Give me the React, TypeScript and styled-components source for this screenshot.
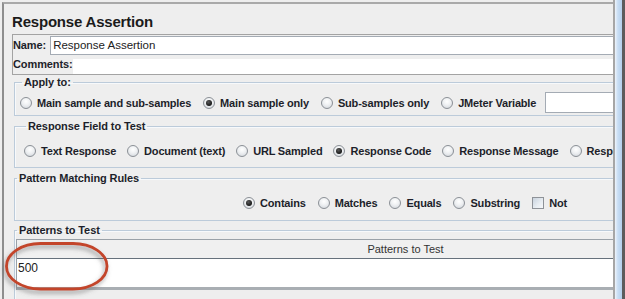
import React from 'react';
import styled, { createGlobalStyle } from 'styled-components';

const Global = createGlobalStyle`
  html, body { margin: 0; padding: 0; background: #eeeeee; }
  body { width: 625px; height: 299px; overflow: hidden; font-family: "Liberation Sans", Arial, sans-serif; color: #1d1f2a; }
  * { box-sizing: border-box; }
`;

const Window = styled.div`
  position: relative;
  display: flex;
  width: 625px;
  height: 299px;
  overflow: hidden;
  background: #eeeeee;
`;

const MainArea = styled.div`
  flex: 1;
  min-width: 0;
  display: flex;
  padding: 2px 0 0 2px;
`;

const Frame = styled.div`
  flex: 1;
  min-width: 0;
  overflow: hidden;
  border-top: 2px solid #a9a9a9;
  border-left: 2px solid #8e8e8e;
`;

const Content = styled.div`
  width: 800px;
`;

const Title = styled.div`
  margin: 9px 0 0 8px;
  height: 18px;
  font-size: 15px;
  line-height: 18px;
  font-weight: bold;
  letter-spacing: -0.2px;
  color: #1b1b1b;
`;

const NamePanel = styled.div`
  margin: 3px 0 0 8px;
  width: 792px;
  border-top: 1px solid #a3a3a3;
  border-left: 1px solid #a3a3a3;
  border-bottom: 1px solid #a3a3a3;
`;

const NameRow = styled.div<{ $h: number }>`
  display: flex;
  align-items: flex-end;
  height: ${p => p.$h}px;
`;

const FieldLabel = styled.span`
  font-size: 11px;
  font-weight: bold;
  letter-spacing: -0.1px;
  line-height: 15px;
  align-self: center;
`;

const TextField = styled.div<{ $bordered?: boolean; $h: number; $ml: number }>`
  flex: 1;
  height: ${p => p.$h}px;
  margin-left: ${p => p.$ml}px;
  background: #ffffff;
  border: ${p => (p.$bordered ? '1px solid #a4abb4' : 'none')};
  border-right: none;
  padding-left: 2px;
  font-size: 11.5px;
  line-height: ${p => p.$h - 2}px;
  color: #222;
`;

const Group = styled.fieldset<{ $mt: number; $pl: number }>`
  margin: ${p => p.$mt}px 0 0 10px;
  padding: 0 0 0 ${p => p.$pl}px;
  width: 782px;
  min-width: 0;
  border: 1px solid #bccbda;
  box-shadow: inset 1px 1px 0 #f7f9fb;
`;

const Legend = styled.legend`
  margin-left: 2px;
  padding: 0 2px;
  font-size: 11px;
  font-weight: bold;
  letter-spacing: -0.1px;
  line-height: 14px;
  color: #1d1f2a;
`;

const OptionRow = styled.div<{ $h: number; $center?: boolean; $pt?: number; $gap?: number }>`
  display: flex;
  align-items: center;
  justify-content: ${p => (p.$center ? 'center' : 'flex-start')};
  gap: ${p => p.$gap ?? 12}px;
  height: ${p => p.$h}px;
  padding-top: ${p => p.$pt ?? 0}px;
`;

const Option = styled.label`
  display: flex;
  align-items: center;
  gap: 5px;
  font-size: 11px;
  font-weight: bold;
  letter-spacing: -0.18px;
  white-space: nowrap;
  color: #1d1f2a;
`;

const RadioCircle = styled.span<{ $checked?: boolean }>`
  flex: none;
  display: flex;
  align-items: center;
  justify-content: center;
  width: 12px;
  height: 12px;
  border-radius: 50%;
  border: 1px solid #8b9096;
  background: radial-gradient(circle at 50% 35%, #ffffff 0%, #eef0f2 45%, #cdd2d8 100%);
  &::after {
    content: '';
    display: ${p => (p.$checked ? 'block' : 'none')};
    width: 6px;
    height: 6px;
    border-radius: 50%;
    background: radial-gradient(circle at 40% 35%, #5a5a5a 0%, #111 75%);
  }
`;

const CheckBox = styled.span`
  flex: none;
  width: 12px;
  height: 12px;
  border: 1px solid #8e9298;
  background: linear-gradient(135deg, #c9d3de 0%, #e8edf2 60%, #f6f8fa 100%);
`;

const VarInput = styled.div`
  margin-left: -3px;
  width: 120px;
  height: 21px;
  background: #fff;
  border: 1px solid #a4abb4;
  border-right: none;
`;

const Table = styled.div`
  margin: 2px 0 0 1px;
  width: 778px;
  border-left: 1px solid #9aa1a8;
`;

const HeaderCell = styled.div`
  height: 19px;
  border-top: 1px solid #9aa1a8;
  background: #f0f0f0;
  text-align: center;
  font-size: 11px;
  line-height: 18px;
  color: #333;
`;

const Body = styled.div`
  height: 32px;
  background: #fff;
  border-top: 1px solid #66717c;
  border-bottom: 3px solid #a9aeb3;
`;

const Cell = styled.div`
  height: 18px;
  padding-left: 1px;
  font-size: 12px;
  line-height: 18px;
  color: #222;
`;

const Filler = styled.div`
  height: 20px;
`;

const ScrollStrip = styled.div`
  flex: none;
  width: 12px;
  border-left: 2px solid #a6a6a6;
  border-right: 3px solid #5c5c5c;
  background: linear-gradient(to right, #eef4fb 0%, #c9def4 40%, #b3cfec 100%);
`;

const Annotation = styled.svg`
  position: absolute;
  left: 0;
  top: 236px;
  width: 120px;
  height: 62px;
  pointer-events: none;
`;

type Opt = { label: string; checked?: boolean; box?: boolean };

const Options: React.FC<{ items: Opt[] }> = ({ items }) => (
  <>
    {items.map(o => (
      <Option key={o.label}>
        {o.box ? <CheckBox /> : <RadioCircle $checked={o.checked} />}
        {o.label}
      </Option>
    ))}
  </>
);

export default function App() {
  return (
    <>
      <Global />
      <Window>
        <MainArea>
          <Frame>
            <Content>
              <Title>Response Assertion</Title>
              <NamePanel>
                <NameRow $h={20}>
                  <FieldLabel>Name:</FieldLabel>
                  <TextField $bordered $h={19} $ml={4}>Response Assertion</TextField>
                </NameRow>
                <NameRow $h={19}>
                  <FieldLabel>Comments:</FieldLabel>
                  <TextField $h={15} $ml={0} />
                </NameRow>
              </NamePanel>

              <Group $mt={0} $pl={5}>
                <Legend>Apply to:</Legend>
                <OptionRow $h={26} $pt={1}>
                  <Options
                    items={[
                      { label: 'Main sample and sub-samples' },
                      { label: 'Main sample only', checked: true },
                      { label: 'Sub-samples only' },
                      { label: 'JMeter Variable' },
                    ]}
                  />
                  <VarInput />
                </OptionRow>
              </Group>

              <Group $mt={3} $pl={9}>
                <Legend>Response Field to Test</Legend>
                <OptionRow $h={34} $pt={1} $gap={11}>
                  <Options
                    items={[
                      { label: 'Text Response' },
                      { label: 'Document (text)' },
                      { label: 'URL Sampled' },
                      { label: 'Response Code', checked: true },
                      { label: 'Response Message' },
                      { label: 'Response Headers' },
                    ]}
                  />
                </OptionRow>
              </Group>

              <Group $mt={3} $pl={0}>
                <Legend>Pattern Matching Rules</Legend>
                <OptionRow $h={35} $center>
                  <Options
                    items={[
                      { label: 'Contains', checked: true },
                      { label: 'Matches' },
                      { label: 'Equals' },
                      { label: 'Substring' },
                      { label: 'Not', box: true },
                    ]}
                  />
                </OptionRow>
              </Group>

              <Group $mt={2} $pl={0}>
                <Legend>Patterns to Test</Legend>
                <Table>
                  <HeaderCell>Patterns to Test</HeaderCell>
                  <Body>
                    <Cell>500</Cell>
                  </Body>
                </Table>
                <Filler />
              </Group>
            </Content>
          </Frame>
        </MainArea>
        <ScrollStrip />
        <Annotation viewBox="0 236 120 62">
          <defs>
            <filter id="sh" x="-20%" y="-30%" width="140%" height="160%">
              <feDropShadow dx="-1.5" dy="3" stdDeviation="2" floodColor="#555" floodOpacity="0.55" />
            </filter>
          </defs>
          <rect x="6.5" y="243.5" width="100.5" height="45.5" rx="34" ry="22.5" fill="none" stroke="#c3452b" strokeWidth="2.8" filter="url(#sh)" />
        </Annotation>
      </Window>
    </>
  );
}
